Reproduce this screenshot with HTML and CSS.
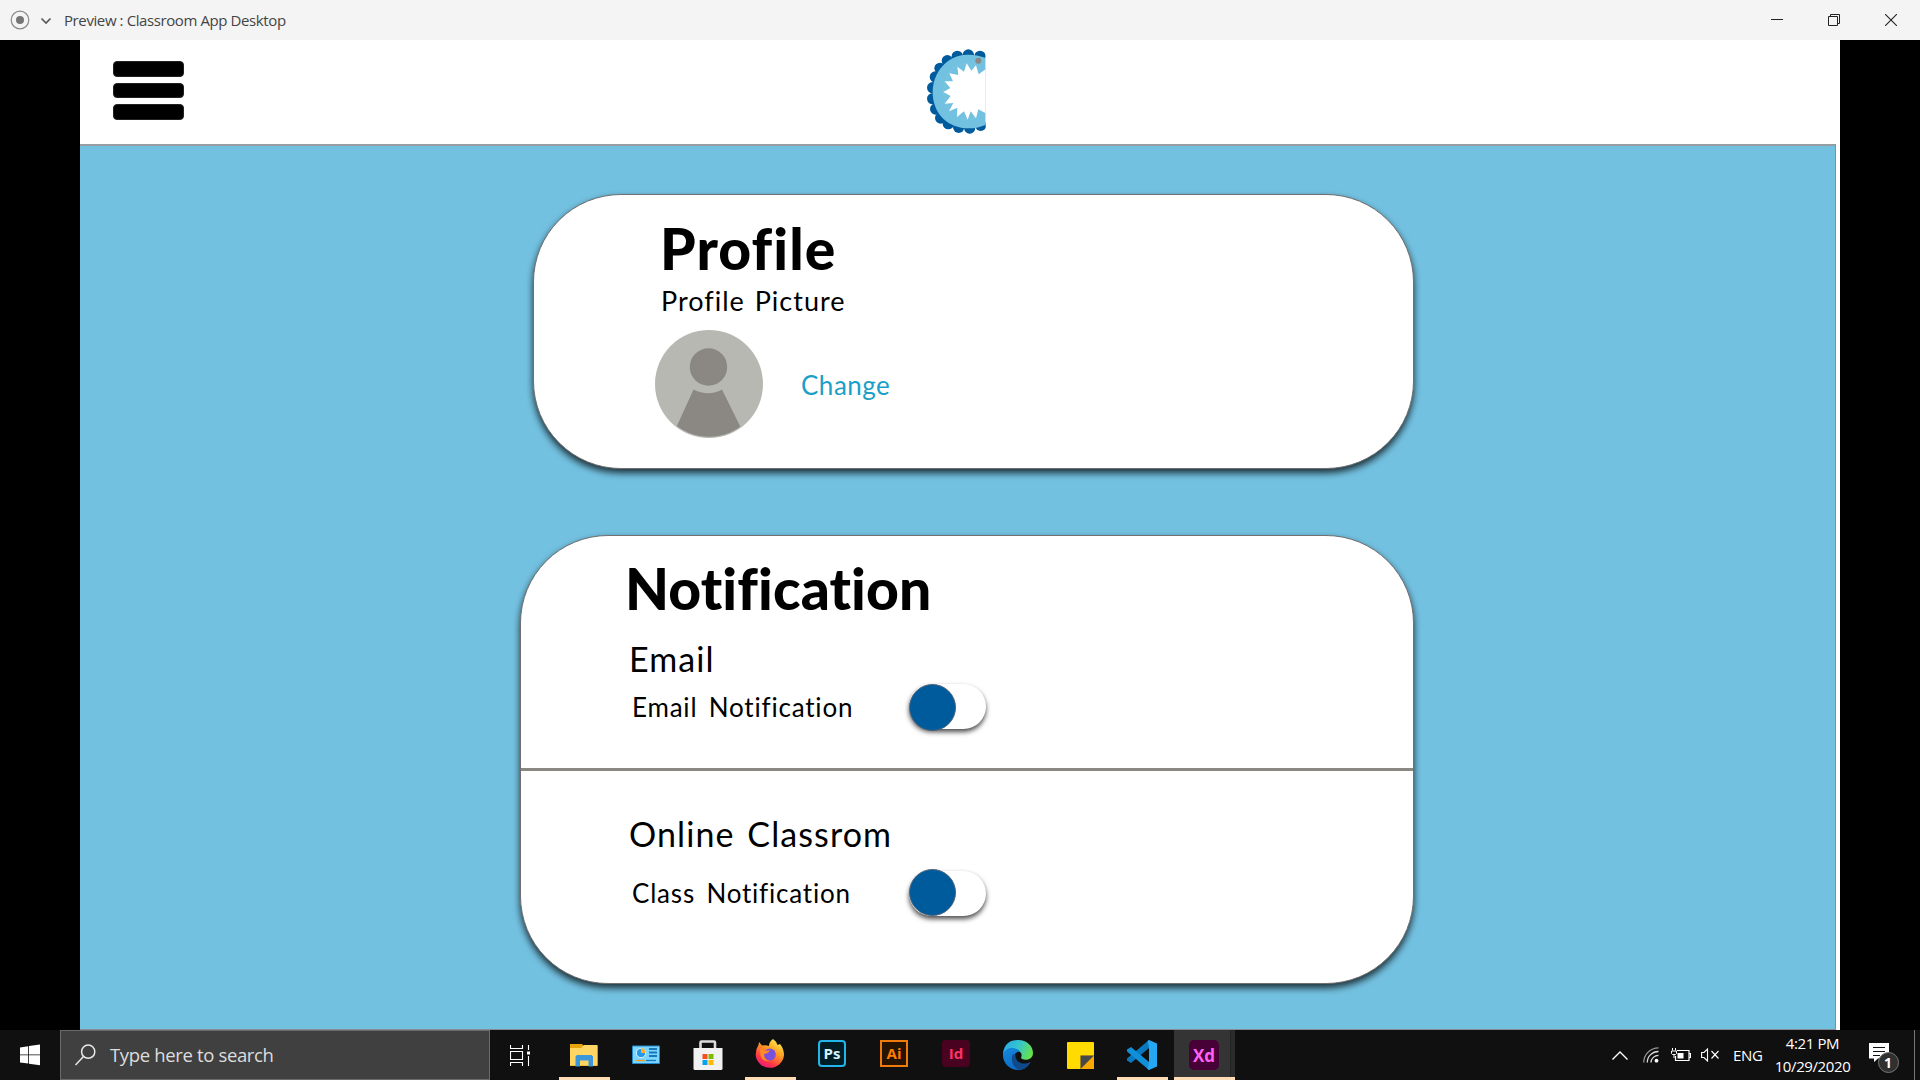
FILE: index.html
```html
<!DOCTYPE html>
<html lang="en">
<head>
<meta charset="utf-8">
<title>Preview : Classroom App Desktop</title>
<link rel="stylesheet" href="styles.css">
</head>
<body>
<header class="titlebar">
  <svg class="record" width="20" height="20" viewBox="0 0 20 20"><circle cx="10" cy="10" r="8.8" fill="none" stroke="#8a8a8a" stroke-width="1.2"/><circle cx="10" cy="10" r="4" fill="#757575"/></svg>
  <svg class="caret" width="12" height="8" viewBox="0 0 12 8"><path d="M1.5 1.5 6 6l4.500-4.500" fill="none" stroke="#555" stroke-width="1.600"/></svg>
  <span class="window-title">Preview : Classroom App Desktop</span>
  <div class="window-buttons">
    <svg width="12" height="12" viewBox="0 0 12 12"><path d="M0 5.500h12" stroke="#222"/></svg>
    <svg width="12" height="12" viewBox="0 0 12 12"><path d="M.5 2.500h9v9h-9zM2.500 2.500v-2h9v9h-2" fill="none" stroke="#222"/></svg>
    <svg width="12" height="12" viewBox="0 0 12 12"><path d="M0 0l12 12M12 0L0 12" stroke="#222" stroke-width="1.100"/></svg>
  </div>
</header>

<main class="stage">
  <div class="app">
    <nav class="app-bar">
      <div class="menu"><i></i><i></i><i></i></div>
      <svg class="logo" width="60" height="86" viewBox="81 39 180 258">
        <clipPath id="c"><path d="M78 36h179v262H78z"/></clipPath>
        <g clip-path="url(#c)">
          <g fill="#005b9c"><circle cx="240" cy="61" r="17"/><circle cx="205" cy="57" r="17"/><circle cx="172" cy="61" r="17"/><circle cx="142" cy="74" r="17"/><circle cx="120" cy="97" r="17"/><circle cx="106" cy="123" r="17"/><circle cx="98" cy="155" r="17"/><circle cx="98" cy="188" r="17"/><circle cx="107" cy="219" r="17"/><circle cx="122" cy="246" r="17"/><circle cx="145" cy="263" r="17"/><circle cx="176" cy="274" r="17"/><circle cx="209" cy="276" r="17"/><circle cx="242" cy="268" r="17"/></g>
          <path d="M257 66C232 56 212 56 200 56C140 58 98 110 98 168C98 234 145 277 205 277C226 277 242 273 257 266Z" fill="#73c1e1"/>
          <path d="M228 88C160 68 131 120 131 168C131 225 180 262 228 245" fill="none" stroke="#8bc9df" stroke-width="1.500" stroke-dasharray="7 4"/>
          <path d="M257 100 236 115 228 88 214 104 200 82 192 107 172 92 175 117 148 112 159 136 134 136 151 156 130 168 152 180 134 203 160 201 147 226 172 215 171 243 192 226 203 251 212 226 228 247 235 220 257 232Z" fill="#fff"/>
          <circle cx="235" cy="74" r="9" fill="#8a8984"/>
        </g>
      </svg>
    </nav>

    <div class="content">
      <section class="card profile">
        <h1 class="title">Profile</h1>
        <p class="label picture-label">Profile Picture</p>
        <div class="picture-row">
          <svg class="avatar" width="108" height="108" viewBox="0 0 108 108">
            <clipPath id="a"><circle cx="54" cy="53.200" r="53.500"/></clipPath>
            <circle cx="54" cy="54" r="54" fill="#b8b8b3"/>
            <g fill="#8b8883"><circle cx="53.500" cy="37" r="18.700"/><path clip-path="url(#a)" d="M38.500 59.500Q53.500 67 67 59.500L86 98V108H21V98Z"/></g>
          </svg>
          <a class="label change">Change</a>
        </div>
      </section>

      <section class="card notification">
        <div class="group">
          <h1 class="title title-wide">Notification</h1>
          <h2 class="heading email">Email</h2>
          <div class="setting"><span class="label">Email Notification</span><span class="toggle"><i class="knob"></i></span></div>
        </div>
        <div class="group second">
          <h2 class="heading">Online Classrom</h2>
          <div class="setting lower"><span class="label">Class Notification</span><span class="toggle toggle-low"><i class="knob"></i></span></div>
        </div>
      </section>
    </div>
  </div>
</main>

<footer class="taskbar">
  <div class="start"><svg width="20" height="22" viewBox="0 0 20 22"><path fill="#fff" d="M0 3.400 8.200 2.200V10.500H0zM9 2.100 20 .5V10.500H9zM0 11.300H8.200V19.600L0 18.400zM9 11.300H20V21.300L9 19.700z"/></svg></div>
  <div class="search">
    <svg width="21" height="22" viewBox="0 0 21 22"><circle cx="13.200" cy="7.700" r="6.600" fill="none" stroke="#e8e8e8" stroke-width="1.500"/><path d="M8.500 12.500.5 21" stroke="#e8e8e8" stroke-width="1.500"/></svg>
    <span class="search-text">Type here to search</span>
  </div>
  <div class="slot task-view"><svg width="21" height="21" viewBox="0 0 21 21"><path d="M.5 0v3.500h12V0M.5 6.500h12v8H.5zM.5 21v-3.500h12V21M18.500 0v5M18.500 11v10" fill="none" stroke="#fff" stroke-width="1.100"/><path d="M17 6.500h3v3h-3z" fill="#fff"/></svg></div>
  <div class="slot running"><svg width="28" height="24" viewBox="0 0 28 24"><path d="M0 1h12l2 2h13.500v20H0z" fill="#e5a50a"/><path d="M0 5h11l3-3h13.500v20.500H0z" fill="#ffd564"/><path d="M5.500 23.500V13.500l1.500-1.500h14.500l1.500 1.500v10h-4.500v-6h-8.500v6z" fill="#3b97da"/></svg></div>
  <div class="slot"><svg width="28" height="20" viewBox="0 0 28 20"><path d="M.5 1h27v17.500H.5z" fill="#7bd5ff" stroke="#2289cf"/><circle cx="9" cy="8" r="4.700" fill="#2497e5" stroke="#d7f4ff"/><path d="M9 8V3a5 5 0 0 1 4.500 5z" fill="#ffae2d"/><path d="M17 4h8M17 7.500h8M17 11h8" stroke="#1878b9" stroke-width="2"/><path d="M4 15.500h9" stroke="#f09b20" stroke-width="1.300"/><path d="M14 15.500h10" stroke="#1679c4" stroke-width="1.300"/></svg></div>
  <div class="slot"><svg width="30" height="30" viewBox="0 0 30 30"><path d="M7.500 10V2.500Q7.500 1.500 8.500 1.500H21Q22 1.500 22 2.500V10" fill="none" stroke="#ddd" stroke-width="2.600"/><path d="M.5 8h29v20.500q0 1.500-1.500 1.500H2Q.5 30 .5 28.500z" fill="#f1f1f1"/><path d="M9.500 14h5v5h-5z" fill="#f25022"/><path d="M15.500 14h5v5h-5z" fill="#7fba00"/><path d="M9.500 20h5v5h-5z" fill="#00a4ef"/><path d="M15.500 20h5v5h-5z" fill="#ffb900"/></svg></div>
  <div class="slot running"><svg class="firefox" width="30" height="30" viewBox="0 0 30 30"><defs><linearGradient id="f" x1=".8" y1="0" x2=".2" y2="1"><stop offset="0" stop-color="#fff44f"/><stop offset=".4" stop-color="#ff9a22"/><stop offset=".75" stop-color="#ff3647"/><stop offset="1" stop-color="#e31587"/></linearGradient></defs><path d="M18 0Q21 2 22.500 6L25 5Q29 10 29 16A14.200 14 0 0 1 .7 16Q.5 10 3.500 6L4 3 7 6.500Q11 6 14 7Q14 3 18 0Z" fill="url(#f)"/><circle cx="14.800" cy="15.500" r="6" fill="#7950dc"/><path d="M5 9Q10 13 15 11Q13 15 9 15Q9 21 15 22Q8 23 5.500 17Z" fill="#ff8b24"/></svg></div>
  <div class="slot"><span class="adobe ps">Ps</span></div>
  <div class="slot"><span class="adobe ai">Ai</span></div>
  <div class="slot"><span class="adobe id">Id</span></div>
  <div class="slot"><svg width="30" height="30" viewBox="0 0 30 30"><defs><linearGradient id="e" x1="0" y1=".2" x2="1" y2=".5"><stop offset="0" stop-color="#2aa9e8"/><stop offset=".5" stop-color="#35c5cf"/><stop offset="1" stop-color="#66e24b"/></linearGradient><linearGradient id="g" x2=".7" y2="1"><stop offset="0" stop-color="#1689dc"/><stop offset="1" stop-color="#0b66c2"/></linearGradient></defs><path d="M0 13Q2 0 15 0C24 0 30 6 30 13C30 19 24 21 19 19C17 18 19 17 18.500 14C17 9 5 7 0 15Z" fill="url(#e)"/><path d="M0 14C3 6 14 7 17.500 12C12 11 10 16 12 20C15 26 22 26 27.500 22Q23 30 15 30A15 15 0 0 1 0 14Z" fill="url(#g)"/><path d="M10 14C7 20 10 28 17 30Q24 29 27.500 22C20 26 12 22 12.500 15Z" fill="#114a8b"/></svg></div>
  <div class="slot"><svg width="27" height="27" viewBox="0 0 27 27"><path d="M1 0h25q1 0 1 1v25q0 1-1 1H1q-1 0-1-1V1q0-1 1-1z" fill="#ffdb00"/><path d="M13.500 13.500H27v12.500q0 1-1 1H13.500z" fill="#f7a900"/><path d="M13.500 13.500H27L13.500 27z" fill="#47484a"/></svg></div>
  <div class="slot running"><svg width="30" height="30" viewBox="0 0 30 30"><path d="M22 0v8L4 23 0 20.500V18.500z" fill="#0879be"/><path d="M22 30v-8L4 7 0 9.500v2z" fill="#118fd8"/><path d="M22 0l8 3.500v23L22 30l-1.500-1L22 22V8l-1.500-7z" fill="#25a7f2"/></svg></div>
  <div class="slot running active"><span class="adobe xd">Xd</span></div>
  <div class="tray">
    <svg class="up" width="16" height="9" viewBox="0 0 16 9"><path d="M.5 8.500 8 1l7.500 7.500" fill="none" stroke="#fff" stroke-width="1.400"/></svg>
    <svg class="wifi" width="16" height="16" viewBox="0 0 16 16"><g fill="none" stroke="#ddd" stroke-width="1.300"><path d="M.7 15.500A15 15 0 0 1 15.500.8" stroke="#999"/><path d="M4.300 15.500A11 11 0 0 1 15.500 4.500M8 15.500A7.500 7.500 0 0 1 15.500 8.300"/></g><circle cx="13.500" cy="13.700" r="1.900" fill="#fff"/></svg>
    <svg class="battery" width="20" height="14" viewBox="0 0 20 14"><path d="M6 2.500h12v10H4.500V8M18.500 5.500h1v4h-1" fill="none" stroke="#fff" stroke-width="1.200"/><path d="M6.500 5h6v5.500h-6z" fill="#fff"/><path d="M1.500 0v2.500M4.500 0v2.500M.5 3h5v2.500l-1 1h-3l-1-1zM3 7v3" fill="none" stroke="#fff"/></svg>
    <svg class="sound" width="18" height="14" viewBox="0 0 18 14"><path d="M.6 4.500H3L6.500 1v12L3 9.500H.6zM10.500 3l7 7.500M17.500 3l-7 7.500" fill="none" stroke="#fff" stroke-width="1.100"/></svg>
    <span class="lang">ENG</span>
    <div class="clock"><span class="time">4:21 PM</span><span class="date">10/29/2020</span></div>
    <div class="action"><svg width="32" height="32" viewBox="0 0 32 32"><path d="M1 1h20v15.500H10L6 20v-3.500H1z" fill="#fff"/><path d="M5 5.500h12M5 9.500h12M5 13.500h7" stroke="#111" stroke-width="1.100"/><circle cx="20.500" cy="20.500" r="10" fill="#303030" stroke="#777"/></svg><b class="badge">1</b></div>
    <i class="desktop-edge"></i>
  </div>
</footer>
</body>
</html>
```
FILE: styles.css
```css
* { box-sizing: border-box; }
html, body { height: 100%; }
body {
  margin: 0;
  display: grid;
  grid-template-rows: 40px 990px 50px;
  overflow: hidden;
  background: #000;
  font-family: "Segoe UI", "Open Sans", sans-serif;
}
h1, h2, p { margin: 0; font-weight: 400; }
svg { display: block; flex: none; }

.titlebar { display: flex; align-items: center; padding-left: 10px; background: #f4f4f4; }
.caret { margin: 2px 12px 0 10px; }
.window-title { font-size: 15px; letter-spacing: -.4px; color: #444; white-space: nowrap; }
.window-buttons { margin-left: auto; display: flex; gap: 45px; padding-right: 23px; }

.stage { padding: 0 80px; }
.app { height: 990px; background: #fff; display: flex; flex-direction: column; }
.app-bar { height: 104px; display: grid; grid-template-columns: 814px 1fr; padding-left: 33px; }
.menu { display: grid; align-content: start; gap: 6px; padding-top: 21px; }
.menu i { width: 71px; height: 15.500px; border-radius: 4px; background: #000; border: 1px solid #222; }
.logo { margin-top: 9px; }
.content {
  flex: 1;
  width: 1756px;
  padding: 48px 0 0 440px;
  background: #73c1e1;
  border: solid #858c92;
  border-width: 2px 1px 1px 0;
  border-top-color: #969ea3;
}

.card {
  border: 1px solid #707070;
  border-radius: 88px;
  background: #fff;
  box-shadow: 0 4px 7px rgba(0, 0, 0, .75);
  color: #000;
  font-family: "Chalkboard SE", Chalkboard, Lato, sans-serif;
  font-variant-ligatures: none;
}
.profile { width: 881px; height: 275px; margin-left: 13px; padding: 18px 0 0 127px; }
.notification { width: 894px; height: 449px; margin-top: 66px; overflow: hidden; }
.title { font-size: 57px; line-height: 68px; font-weight: 900; letter-spacing: 1.1px; padding-top: 1px; margin-bottom: -1px; margin-left: -1px; }
.title-wide { margin-left: -3px; letter-spacing: .1px; }
.label { font-size: 26px; line-height: 32px; letter-spacing: .8px; word-spacing: 4px; white-space: nowrap; padding: 1px 0 0 1px; }
.heading { font-size: 34px; line-height: 40px; letter-spacing: 1.1px; word-spacing: 3px; padding-left: 1px; }
.picture-label { margin-top: 4px; padding: 0; font-size: 27px; letter-spacing: 1px; word-spacing: 2px; }
.picture-row { display: flex; align-items: center; gap: 38px; margin: 13px 0 0 -6px; }
.change { color: #1b9fc8; letter-spacing: .5px; padding: 2px 0 0; }
.group { height: 232px; padding: 17px 0 0 107px; }
.second { height: 215px; border-top: 3px solid #8b8883; padding-top: 43px; }
.email { margin-top: 18px; }
.setting { display: grid; grid-template-columns: 278px 77px; align-items: center; height: 47px; margin: 4px 0 0 3px; }
.lower { margin-top: 15px; }
.toggle { height: 45px; border-radius: 23px; background: #fff; box-shadow: 0 3px 5px rgba(0, 0, 0, .7); }
.toggle-low { margin-top: 2px; }
.knob { display: block; width: 47px; height: 47px; border-radius: 50%; background: #005b9c; border: 1px solid #4b6178; }
.toggle-low .knob { margin-top: -2px; }

.taskbar { display: flex; background: #101010; color: #fff; }
.start { width: 60px; display: grid; place-items: center; }
.search { width: 430px; display: flex; align-items: center; gap: 14px; padding-left: 14px; background: #404040; border: 1px solid #6a6a6a; }
.search-text { font-size: 18.500px; letter-spacing: -.35px; color: #ddd; white-space: nowrap; margin-top: -2px; }
.slot { width: 62px; display: grid; place-items: center; }
.task-view { width: 63px; padding-right: 2px; }
.running { background: linear-gradient(#ffdcb4, #ffdcb4) 6px 100% / 51px 3px no-repeat; }
.firefox { margin-top: -2px; }
.active { background: linear-gradient(#ffdcb4, #ffdcb4) 1px 100% / 61px 3px no-repeat, linear-gradient(90deg, transparent 1px, #343434 1px 57px, #222 57px 58px, #2b2b2b 58px); }
.adobe { display: grid; place-items: center; width: 28px; height: 27px; margin-top: -3px; border-radius: 4px; font: 700 15px/1 "Open Sans", sans-serif; }
.ps { background: #001d26; border: 2px solid #22b5ea; color: #d5f2ff; }
.ai { background: #261300; border: 2px solid #f07b0c; border-radius: 0; color: #ff7c00; }
.id { background: #49021f; color: #ff3366; }
.xd { width: 30px; height: 30px; margin-top: 0; border-radius: 5px; background: #470137; color: #ff61f6; font-size: 17px; }

.tray { margin-left: auto; display: flex; align-items: center; }
.wifi { margin-left: 15px; }
.battery { margin-left: 12px; }
.sound { margin-left: 10px; }
.lang { width: 29px; margin-left: 14px; font-size: 15px; letter-spacing: -.3px; }
.clock { width: 75px; margin-left: 13px; display: grid; justify-content: center; justify-items: center; font-size: 15px; letter-spacing: -.4px; line-height: 23px; white-space: nowrap; }
.action { position: relative; margin: 5px 0 0 18px; }
.badge { position: absolute; left: 16px; top: 11px; font-size: 14px; line-height: 20px; }
.desktop-edge { width: 6px; height: 50px; margin-left: 14px; border-left: 1px solid #777; }
```
